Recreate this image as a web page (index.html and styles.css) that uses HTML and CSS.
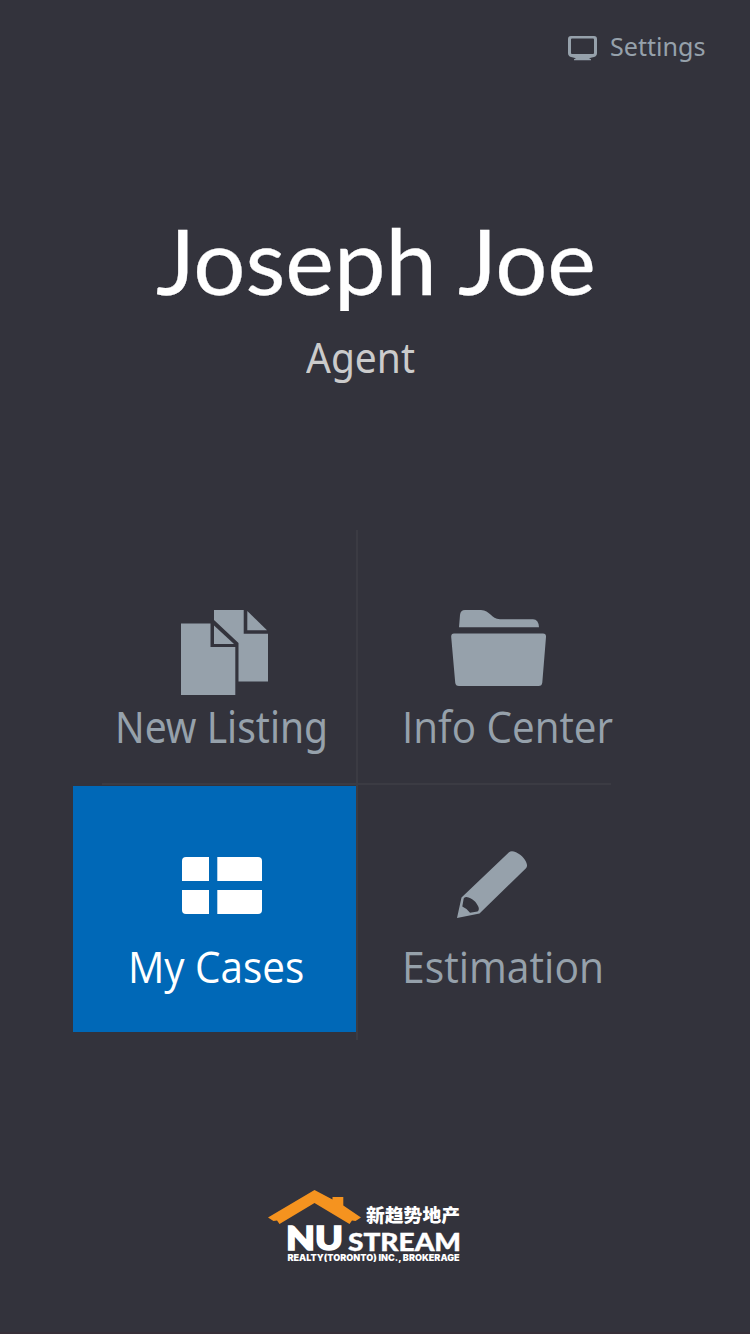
FILE: index.html
```html
<!DOCTYPE html>
<html lang="en">
<head>
<meta charset="utf-8">
<title>Dashboard</title>
<link rel="stylesheet" href="styles.css">
</head>
<body>
<div class="screen">
  <header class="topbar">
    <a class="settings">
      <svg class="settings-icon" width="30" height="26" viewBox="0 0 30 26">
        <path fill="currentColor" fill-rule="evenodd" d="M3 0H26Q29 0 29 3V17Q29 20 26 21L21 22.200 23 23.300V24.200H6V23.300L8 22.200 3 21Q0 20 0 17V3Q0 0 3 0ZM4 2.500Q3 2.500 3 3.500V17Q3 18 4 18H25Q26 18 26 17V3.500Q26 2.500 25 2.500Z"/>
      </svg>
      <span class="settings-text">Settings</span>
    </a>
  </header>

  <section class="profile">
    <h1 class="name">Joseph Joe</h1>
    <p class="role">Agent</p>
  </section>

  <nav class="menu">
    <div class="rule-v"></div>
    <div class="rule-h"></div>
    <a class="tile tile-listing">
      <svg class="icon" width="88" height="86" viewBox="0 0 88 86">
        <g fill="currentColor">
          <path d="M0 13.5H29.5V37H54.3V85H0Z"/>
          <path d="M33 15.5V34H53Z"/>
          <path d="M33 0H62.7V23.7H87V71.5H57.5V33L33 10Z"/>
          <path d="M66.3 1V20.3H86Z"/>
        </g>
      </svg>
      <span class="label">New Listing</span>
    </a>
    <a class="tile tile-info">
      <svg class="icon" width="96" height="77" viewBox="0 0 96 77">
        <g fill="currentColor">
          <path d="M8 17.2L9 5Q9.500 0 14 0H30C39 0 40 9.200 49 9.200H82Q87.500 9.200 88 17.2Z"/>
          <path d="M3 23.500H92Q95.300 23.500 95 27L91.300 72.500Q91 76 87.500 76H8Q4.500 76 4.200 72.500L.2 27Q0 23.500 3 23.500Z"/>
        </g>
      </svg>
      <span class="label">Info Center</span>
    </a>
    <a class="tile tile-cases">
      <svg class="icon" width="80" height="57" viewBox="0 0 80 57">
        <g fill="currentColor">
          <path d="M4 0H27V24H0V4Q0 0 4 0Z"/>
          <path d="M35.300 0H76Q80 0 80 4V24H35.300Z"/>
          <path d="M0 33H27V57H4Q0 57 0 53Z"/>
          <path d="M35.300 33H80V53Q80 57 76 57H35.300Z"/>
        </g>
      </svg>
      <span class="label">My Cases</span>
    </a>
    <a class="tile tile-estimation">
      <svg class="icon" width="71" height="68" viewBox="0 0 71 68">
        <path fill="currentColor" fill-rule="evenodd" d="M0 67L4.500 46.500 52 1.200Q54.500-.8 59 1.300C65 4 69.500 9.500 70 14Q70.200 16 69 17.300L22.500 62.500ZM6.700 47.500 5.300 55.500Q10 57.500 13 61.700L20.500 60.500Q22.500 59.300 21.500 56C19.500 51 15 46.500 9.500 45.900Q7.300 45.700 6.700 47.500Z"/>
      </svg>
      <span class="label">Estimation</span>
    </a>
  </nav>

  <footer class="brand">
    <svg width="194" height="76" viewBox="0 0 194 76">
      <path fill="#f5931f" d="M46.500 0L64.500 9.500V7H75.300V15.500L93 27.500 87.500 31 84 30.500 81.500 34 46.500 13 11.500 34 9 30.500 5.500 31 0 27.500Z"/>
      <g fill="#fff">
        <text class="brand-cjk" x="98" y="31.500" textLength="94" lengthAdjust="spacingAndGlyphs">新趋势地产</text>
        <text class="brand-nu" x="18" y="59.500" textLength="57" lengthAdjust="spacingAndGlyphs">NU</text>
        <text class="brand-stream" x="80" y="60.800" textLength="113" lengthAdjust="spacingAndGlyphs">STREAM</text>
        <text class="brand-sub" x="19.500" y="70.800" textLength="172" lengthAdjust="spacingAndGlyphs">REALTY(TORONTO) INC., BROKERAGE</text>
      </g>
    </svg>
  </footer>
</div>
</body>
</html>
```
FILE: styles.css
```css
* { box-sizing: border-box; }

body {
  margin: 0;
  background: #33333c;
  font-family: "Noto Sans", "Open Sans", sans-serif;
}

.screen {
  display: flex;
  flex-direction: column;
  width: 750px;
  height: 1334px;
  overflow: hidden;
  color: #96a1ab;
  border-bottom: 2px solid #362f38;
}

.topbar {
  display: flex;
  justify-content: flex-end;
  height: 206px;
  padding: 28px 44px 0 0;
}

.settings {
  display: flex;
  gap: 12px;
  width: 138px;
  height: 40px;
}

.settings-icon { margin-top: 8px; flex: none; }

.settings-text {
  font-size: 26px;
  line-height: 37px;
  transform: scaleX(.965);
  transform-origin: left;
}

.profile { height: 325px; }

.name {
  width: max-content;
  margin: 0 0 0 156px;
  font: 400 91px/108px Lato, sans-serif;
  color: #fff;
  -webkit-text-stroke: .3px #fff;
  transform: scaleX(1.012);
  transform-origin: left;
}

.role {
  width: max-content;
  margin: 13px 0 0 306px;
  font-size: 41px;
  line-height: 60px;
  color: #cbcbcb;
  transform: scaleX(.95);
  transform-origin: left;
}

.menu {
  display: grid;
  grid-template-columns: 283px 2px 253px;
  grid-template-rows: 252px 3px 246px 8px;
  height: 509px;
  margin-left: 73px;
}

.rule-v { grid-area: 1 / 2 / 5 / 3; margin-top: -1px; background: #3b3b43; }
.rule-h { grid-area: 2 / 1 / 3 / 4; height: 2px; margin-left: 29px; background: #3b3b43; }

.tile {
  display: flex;
  flex-direction: column;
  align-items: flex-start;
}

.tile-listing { grid-area: 1 / 1; padding: 79px 0 0 42px; }
.tile-info { grid-area: 1 / 3; padding: 79px 0 0 44px; }
.tile-cases { grid-area: 3 / 1; padding: 71px 0 0 55px; background: #0068b7; color: #fff; }
.tile-estimation { grid-area: 3 / 3; padding: 65px 0 0 44px; }

.icon { display: block; flex: none; }
.tile-listing .icon { margin-left: 66px; }
.tile-info .icon { margin-left: 49px; }
.tile-cases .icon { margin-left: 54px; }
.tile-estimation .icon { margin-left: 55px; }

.label {
  font: 43px/60px "Open Sans", sans-serif;
  white-space: nowrap;
  transform-origin: left;
}

.tile-listing .label { margin-top: 1px; font-family: "Noto Sans", sans-serif; transform: scaleX(.907); }
.tile-info .label { margin-top: 10px; transform: scaleX(.94); }
.tile-cases .label { margin-top: 23px; transform: scaleX(.94); }
.tile-estimation .label { margin-top: 18px; transform: scaleX(.95); }

.brand { margin: 150px 0 0 268px; }
.brand svg { display: block; }
.brand-cjk { font: 900 18.500px "Noto Sans CJK SC", sans-serif; }
.brand-nu { font: 900 32.500px Lato, sans-serif; stroke: #fff; stroke-width: 1.600px; }
.brand-stream { font: 900 24.500px Lato, sans-serif; stroke: #fff; stroke-width: .4px; }
.brand-sub { font: 900 9px Inter, sans-serif; }
```
